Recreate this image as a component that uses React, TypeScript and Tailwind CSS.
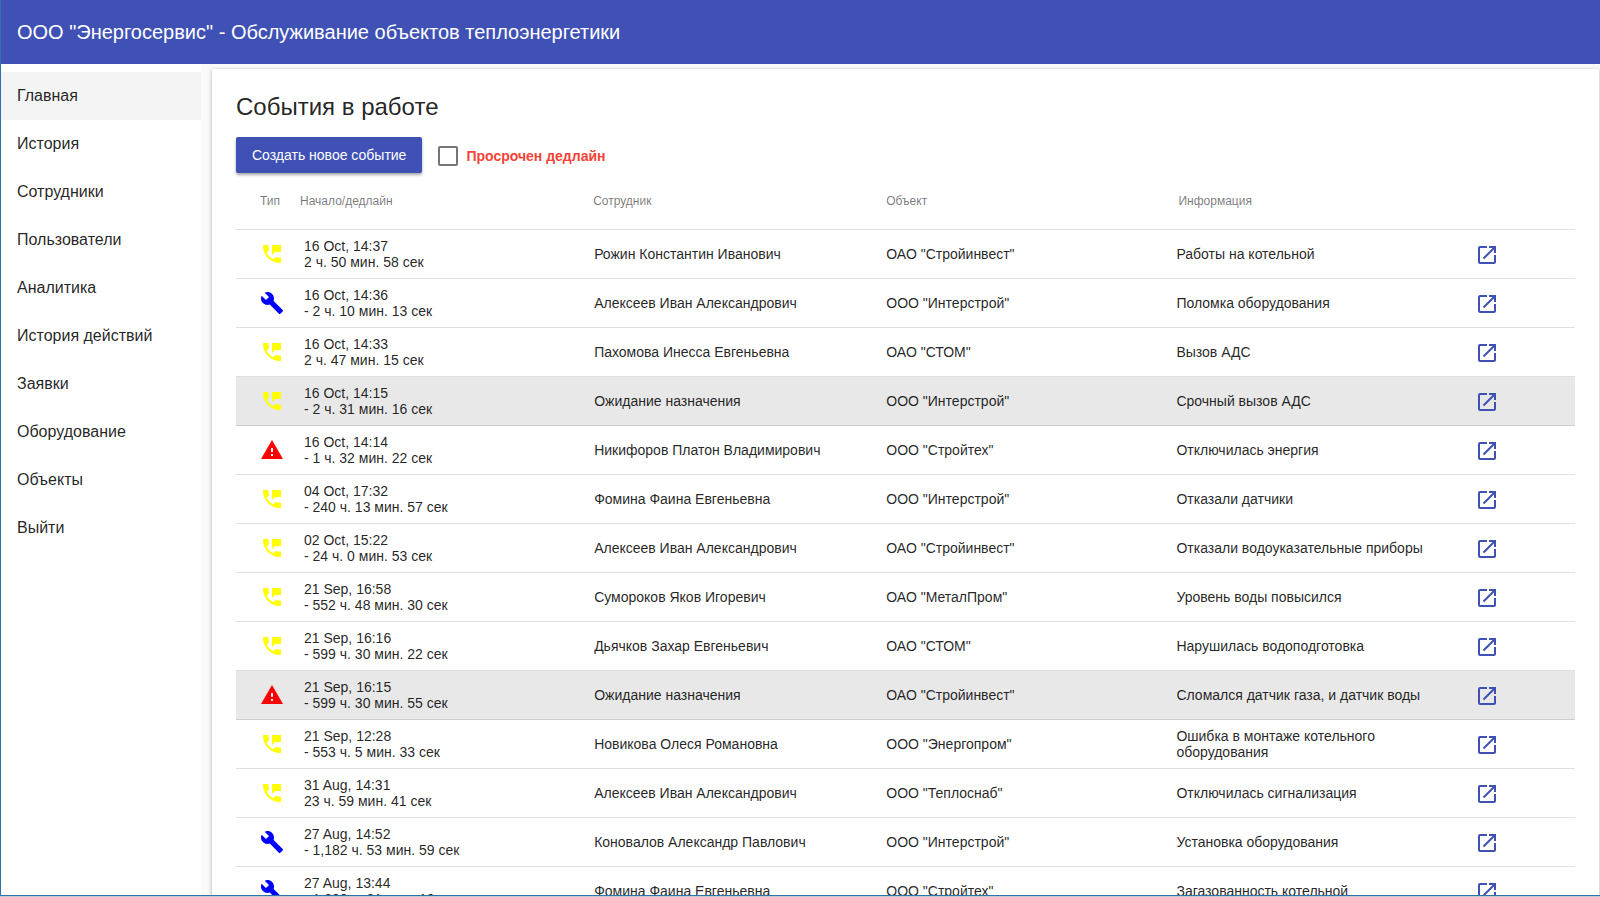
import { useState } from "react";
import { MdBuild, MdOpenInNew, MdWarning } from "react-icons/md";

type EventKind = "call" | "repair" | "alarm";

type WorkEvent = {
  kind: EventKind;
  start: string;
  deadline: string;
  employee: string;
  place: string;
  info: string;
  waiting?: boolean;
};

const NAV = [
  "Главная",
  "История",
  "Сотрудники",
  "Пользователи",
  "Аналитика",
  "История действий",
  "Заявки",
  "Оборудование",
  "Объекты",
  "Выйти",
];

const EVENTS: WorkEvent[] = [
  { kind: "call", start: "16 Oct, 14:37", deadline: "2 ч. 50 мин. 58 сек", employee: "Рожин Константин Иванович", place: 'ОАО "Стройинвест"', info: "Работы на котельной" },
  { kind: "repair", start: "16 Oct, 14:36", deadline: "- 2 ч. 10 мин. 13 сек", employee: "Алексеев Иван Александрович", place: 'ООО "Интерстрой"', info: "Поломка оборудования" },
  { kind: "call", start: "16 Oct, 14:33", deadline: "2 ч. 47 мин. 15 сек", employee: "Пахомова Инесса Евгеньевна", place: 'ОАО "СТОМ"', info: "Вызов АДС" },
  { kind: "call", start: "16 Oct, 14:15", deadline: "- 2 ч. 31 мин. 16 сек", employee: "Ожидание назначения", place: 'ООО "Интерстрой"', info: "Срочный вызов АДС", waiting: true },
  { kind: "alarm", start: "16 Oct, 14:14", deadline: "- 1 ч. 32 мин. 22 сек", employee: "Никифоров Платон Владимирович", place: 'ООО "Стройтех"', info: "Отключилась энергия" },
  { kind: "call", start: "04 Oct, 17:32", deadline: "- 240 ч. 13 мин. 57 сек", employee: "Фомина Фаина Евгеньевна", place: 'ООО "Интерстрой"', info: "Отказали датчики" },
  { kind: "call", start: "02 Oct, 15:22", deadline: "- 24 ч. 0 мин. 53 сек", employee: "Алексеев Иван Александрович", place: 'ОАО "Стройинвест"', info: "Отказали водоуказательные приборы" },
  { kind: "call", start: "21 Sep, 16:58", deadline: "- 552 ч. 48 мин. 30 сек", employee: "Сумороков Яков Игоревич", place: 'ОАО "МеталПром"', info: "Уровень воды повысился" },
  { kind: "call", start: "21 Sep, 16:16", deadline: "- 599 ч. 30 мин. 22 сек", employee: "Дьячков Захар Евгеньевич", place: 'ОАО "СТОМ"', info: "Нарушилась водоподготовка" },
  { kind: "alarm", start: "21 Sep, 16:15", deadline: "- 599 ч. 30 мин. 55 сек", employee: "Ожидание назначения", place: 'ОАО "Стройинвест"', info: "Сломался датчик газа, и датчик воды", waiting: true },
  { kind: "call", start: "21 Sep, 12:28", deadline: "- 553 ч. 5 мин. 33 сек", employee: "Новикова Олеся Романовна", place: 'ООО "Энергопром"', info: "Ошибка в монтаже котельного оборудования" },
  { kind: "call", start: "31 Aug, 14:31", deadline: "23 ч. 59 мин. 41 сек", employee: "Алексеев Иван Александрович", place: 'ООО "Теплоснаб"', info: "Отключилась сигнализация" },
  { kind: "repair", start: "27 Aug, 14:52", deadline: "- 1,182 ч. 53 мин. 59 сек", employee: "Коновалов Александр Павлович", place: 'ООО "Интерстрой"', info: "Установка оборудования" },
  { kind: "repair", start: "27 Aug, 13:44", deadline: "- 1,200 ч. 31 мин. 12 сек", employee: "Фомина Фаина Евгеньевна", place: 'ООО "Стройтех"', info: "Загазованность котельной" },
];

export default function App() {
  const [active, setActive] = useState(NAV[0]);
  const [overdue, setOverdue] = useState(false);
  const rows = overdue ? EVENTS.filter((e) => e.deadline.startsWith("-")) : EVENTS;

  return (
    <div className="h-screen bg-[#c3c9d0] pb-px font-['Liberation_Sans',Arial,sans-serif] text-black/87">
      <div className="flex h-full flex-col overflow-hidden border-b border-l border-[#2f74a8] bg-[#fafafa]">
        <header className="flex h-16 shrink-0 items-center bg-[#3f51b5] px-4">
          <h1 className="text-xl font-medium text-white">ООО "Энергосервис" - Обслуживание объектов теплоэнергетики</h1>
        </header>

        <div className="flex min-h-0 flex-1">
          <nav className="w-50 shrink-0 bg-white pt-2">
            {NAV.map((item) => (
              <a
                key={item}
                href="#"
                onClick={() => setActive(item)}
                className={`flex h-12 items-center px-4 text-base ${item === active ? "bg-[#f4f4f4]" : "hover:bg-[#f4f4f4]"}`}
              >
                {item}
              </a>
            ))}
          </nav>

          <main className="min-w-0 flex-1 overflow-hidden pt-[5px] pr-px pl-[11px]">
            <section className="min-h-full rounded-xs bg-white p-6 shadow-[0_1px_4px_rgba(0,0,0,0.3)]">
              <h2 className="pb-4 text-2xl leading-7">События в работе</h2>

              <div className="flex items-center gap-4">
                <button className="h-9 rounded-xs bg-[#3f51b5] px-4 text-sm font-medium text-white shadow-[0_2px_3px_rgba(0,0,0,0.35)]">
                  Создать новое событие
                </button>
                <label className="flex items-center gap-2 pt-0.5 text-sm font-bold text-[#f44336]">
                  <input
                    type="checkbox"
                    checked={overdue}
                    onChange={(e) => setOverdue(e.target.checked)}
                    className="size-5 appearance-none rounded-xs border-2 border-[#757575] checked:border-[#3f51b5] checked:bg-[#3f51b5]"
                  />
                  Просрочен дедлайн
                </label>
              </div>

              <table className="w-full table-fixed text-left text-sm leading-4">
                <thead>
                  <tr className="h-14 border-b border-[#e0e0e0] text-xs text-black/54">
                    <th className="w-16 pl-6 font-normal">Тип</th>
                    <th className="font-normal">Начало/дедлайн</th>
                    <th className="pl-px font-normal">Сотрудник</th>
                    <th className="pl-0.5 font-normal">Объект</th>
                    <th className="w-[22%] pl-0.5 font-normal">Информация</th>
                    <th className="w-26" />
                  </tr>
                </thead>
                <tbody>
                  {rows.map((e) => (
                    <EventRow key={e.start} event={e} />
                  ))}
                </tbody>
              </table>
            </section>
          </main>
        </div>
      </div>
    </div>
  );
}

function EventRow({ event }: { event: WorkEvent }) {
  return (
    <tr className={`h-[49px] border-b ${event.waiting ? "border-[#cccccc] bg-[#e8e8e8]" : "border-[#e0e0e0]"}`}>
      <td className="pl-6">
        <KindIcon kind={event.kind} />
      </td>
      <td className="pl-1">
        {event.start}
        <br />
        {event.deadline}
      </td>
      <td className="pl-0.5">{event.employee}</td>
      <td className="pl-0.5">{event.place}</td>
      <td className="pr-8">{event.info}</td>
      <td className="pt-0.5 pl-1">
        <button aria-label="Открыть" className="block text-[#3f51b5]">
          <MdOpenInNew className="size-6" />
        </button>
      </td>
    </tr>
  );
}

function KindIcon({ kind }: { kind: EventKind }) {
  if (kind === "repair") return <MdBuild className="size-6 text-[#0000ff]" />;
  if (kind === "alarm") return <MdWarning className="size-6 text-[#ff0000]" />;
  // handset with a speech bubble
  return (
    <svg viewBox="0 0 24 24" className="size-6 fill-[#ffff00]">
      <path d="M20 15.5c-1.25 0-2.45-.2-3.57-.57-.35-.11-.74-.03-1.02.24l-2.2 2.2c-2.83-1.44-5.15-3.75-6.59-6.58l2.2-2.21c.28-.27.36-.66.25-1.01C8.7 6.45 8.5 5.25 8.5 4c0-.55-.45-1-1-1H4c-.55 0-1 .45-1 1 0 9.39 7.61 17 17 17 .55 0 1-.45 1-1v-3.5c0-.55-.45-1-1-1zM12 3v10l3-3h6V3h-9z" />
    </svg>
  );
}
